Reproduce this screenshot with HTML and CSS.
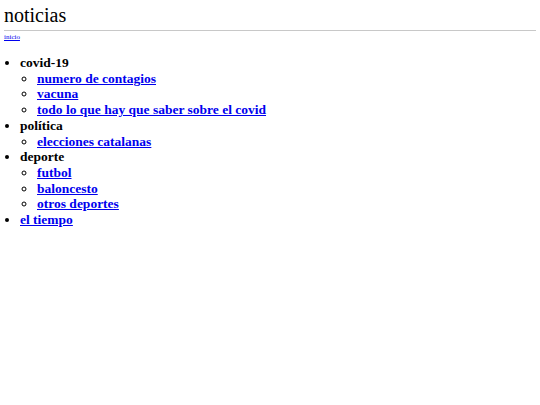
FILE: index.html
```html
<!DOCTYPE html>
<html lang="es">
<head>
    <meta charset="UTF-8">
    <meta name="viewport" content="width=device-width, initial-scale=1.0">
    <title>noticias</title>
    <link rel="stylesheet" href="styles.css">
</head>
<body>

    <header class="cabecera">
        <h1 class="titulo">noticias</h1>
    </header>
    <nav class="migas">
        <a href="#">inicio</a>
    </nav>

    <ul class="menu">
        <li>covid-19
            <ul>
                <li><a href="#">numero de contagios</a></li>
                <li><a href="#">vacuna</a></li>
                <li><a href="#">todo lo que hay que saber sobre el covid</a></li>
            </ul>
        </li>
        <li>política
            <ul>
                <li><a href="#">elecciones catalanas</a></li>
            </ul>
        </li>
        <li>deporte
            <ul>
                <li><a href="#">futbol</a></li>
                <li><a href="#">baloncesto</a></li>
                <li><a href="#">otros deportes</a></li>
            </ul>
        </li>
        <li><a href="#">el tiempo</a></li>
    </ul>

</body>
</html>
```

FILE: styles.css
```css
body {
    font-family: "Liberation Serif", "Times New Roman", serif;
    margin: 4px;
    background-color: white;
    color: black;
}

/* Cabecera */
.cabecera {
    border-bottom: 1px solid #c8c8c8;
    padding-bottom: 3px;
}
.titulo {
    font-size: 20px;
    font-weight: normal;
    margin: 0;
    line-height: 23px;
}

.migas {
    font-size: 7px;
    margin-top: 2px;
}
.migas a {
    color: #0000ee;
}

/* Menu de secciones */
.menu {
    font-size: 13.5px;
    line-height: 15.7px;
    font-weight: bold;
    margin: 14px 0 0 0;
    padding-left: 16px;
    list-style: disc;
}
.menu ul {
    margin: 0;
    padding-left: 17px;
    list-style: circle;
}
.menu a {
    color: #0000ee;
}
```
